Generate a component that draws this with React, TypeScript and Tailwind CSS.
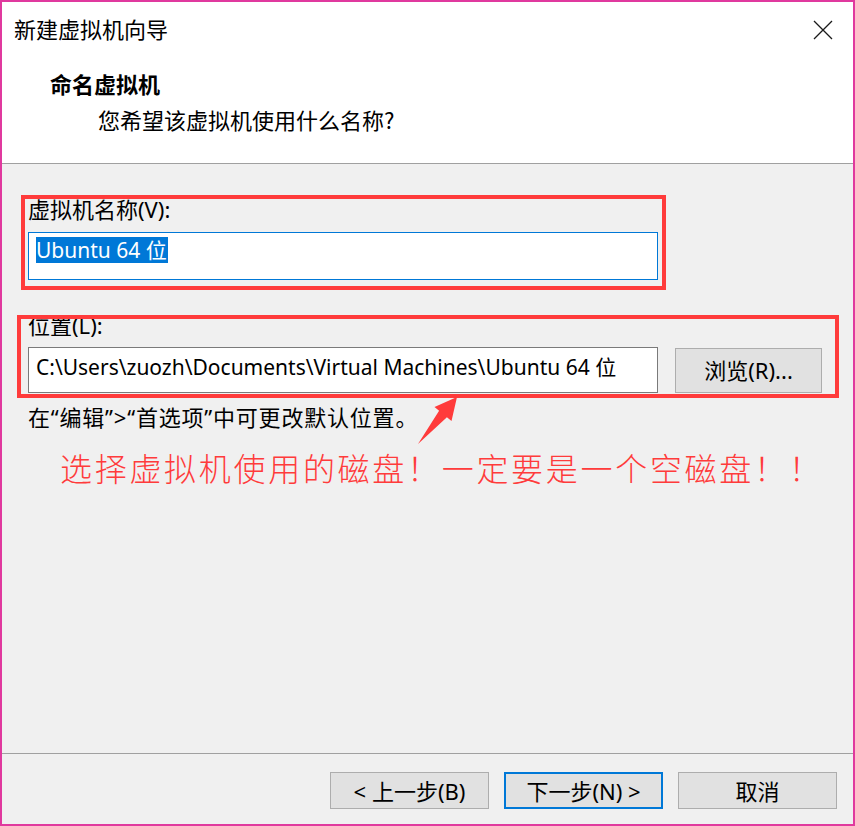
import React from "react";

const FONT = "'Noto Sans', 'Noto Sans CJK SC', sans-serif";
const CJK = "'Noto Sans CJK SC', 'Noto Sans', sans-serif";

function Btn({ children, primary }: { children: React.ReactNode; primary?: boolean }) {
  return (
    <div
      className={
        "w-[159px] h-[37px] flex items-center justify-center bg-[#e1e1e1] text-[22px] text-black leading-none " +
        (primary ? "border-2 border-[#0078d7]" : "border border-[#adadad]")
      }
    >
      {children}
    </div>
  );
}

export default function App() {
  return (
    <div
      className="relative w-[855px] h-[826px] border-2 border-[#e0399e] bg-[#f0f0f0] flex flex-col overflow-hidden text-black"
      style={{ fontFamily: FONT }}
    >
      {/* title bar */}
      <div className="h-[58px] bg-white flex items-center justify-between pl-[12px] pr-[20px] pb-[6px] shrink-0">
        <span className="text-[22px] leading-[28px]" style={{ fontFamily: CJK }}>新建虚拟机向导</span>
        <svg width="20" height="20" viewBox="0 0 20 20" className="mt-[4px]">
          <path d="M1 1 L19 19 M19 1 L1 19" stroke="#1a1a1a" strokeWidth="1.3" fill="none" />
        </svg>
      </div>
      {/* header */}
      <div className="h-[103px] bg-white shrink-0 pt-[9px]">
        <div className="pl-[48px] text-[22px] leading-[28px] font-bold" style={{ fontFamily: CJK }}>命名虚拟机</div>
        <div className="pl-[96px] mt-[8px] text-[22px] leading-[28px]" style={{ fontFamily: CJK }}>您希望该虚拟机使用什么名称?</div>
      </div>
      <div className="h-px bg-[#a0a0a0] shrink-0" />
      {/* body */}
      <div className="flex-1 pl-[26px] pt-[31px]">
        <div className="text-[22px] leading-[28px]">虚拟机名称(V):</div>
        <div className="mt-[9px] w-[630px] h-[48px] bg-white border border-[#0078d7] pl-[7px] pt-[4px]">
          <span className="inline-block bg-[#0078d7] text-white text-[21px] leading-[26px] pr-[1px]">Ubuntu 64 位</span>
        </div>
        <div className="mt-[31px] text-[22px] leading-[28px]">位置(L):</div>
        <div className="mt-[8px] flex items-center gap-[17px]">
          <div className="w-[630px] h-[46px] bg-white border border-[#7a7a7a] pl-[7px] pt-[5px] text-[21px] leading-[28px] whitespace-nowrap overflow-hidden">
            C:\Users\zuozh\Documents\Virtual Machines\Ubuntu 64 位
          </div>
          <div className="w-[147px] h-[45px] bg-[#e1e1e1] border border-[#adadad] flex items-center justify-center text-[22px]">
            浏览(R)...
          </div>
        </div>
        <div className="mt-[10px] text-[22px] leading-[28px] tracking-[0.8px]">在“编辑”&gt;“首选项”中可更改默认位置。</div>
        <div
          className="mt-[16px] ml-[32px] text-[32px] leading-[40px] font-light text-[#ff3b3b] tracking-[2.7px]"
          style={{ fontFamily: CJK }}
        >
          选择虚拟机使用的磁盘！一定要是一个空磁盘！！
        </div>
      </div>
      {/* footer */}
      <div className="h-px bg-[#a0a0a0] shrink-0" />
      <div className="h-[70px] shrink-0 flex justify-end items-start pt-[18px] pr-[16px] gap-[15px]">
        <Btn>&lt; 上一步(B)</Btn>
        <Btn primary>下一步(N) &gt;</Btn>
        <Btn>取消</Btn>
      </div>

      {/* annotations */}
      <div className="absolute left-[19px] top-[193px] w-[645px] h-[95px] border-4 border-[#ff3b3b] pointer-events-none" />
      <div className="absolute left-[15px] top-[313px] w-[822px] h-[83px] border-4 border-[#ff3b3b] pointer-events-none" />
      <svg className="absolute left-0 top-0 pointer-events-none" width="855" height="826" viewBox="2 2 855 826">
        <polygon
          points="457,397 451.5,421 446.9,417.2 418,444 439.1,410.8 434.5,407"
          fill="#ff3b3b"
        />
      </svg>
    </div>
  );
}
